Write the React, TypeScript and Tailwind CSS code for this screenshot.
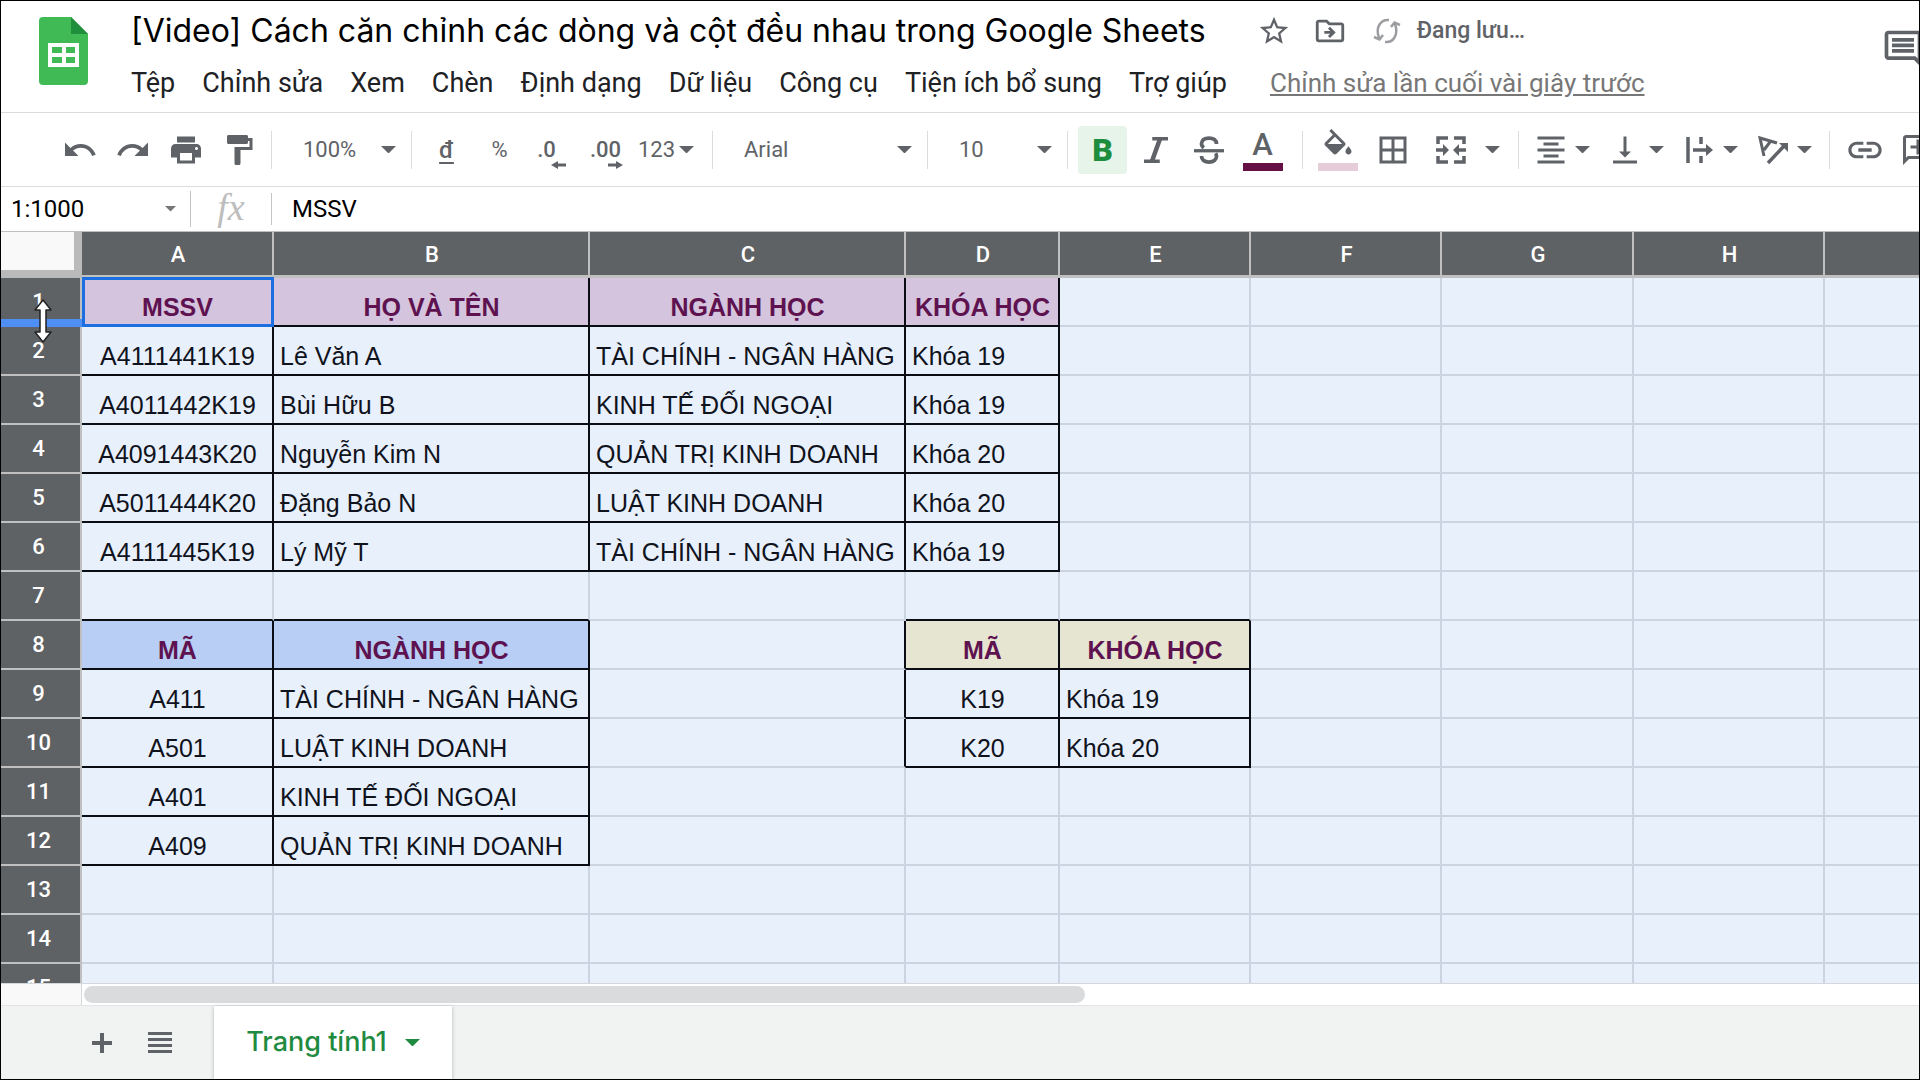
import type { ReactNode } from 'react';
import {
  MdBorderAll,
  MdFormatAlignCenter,
  MdFormatPaint,
  MdLink,
  MdOutlineAddComment,
  MdOutlineComment,
  MdOutlineDriveFileMove,
  MdPrint,
  MdRedo,
  MdStarBorder,
  MdUndo,
  MdVerticalAlignBottom,
} from 'react-icons/md';

type Block = {
  row: number;
  col: number;
  fill: string;
  centered: number[];
  data: string[][];
};

type CellInfo = { text: string; header: boolean; centered: boolean; fill: string };

const menus = ['Tệp', 'Chỉnh sửa', 'Xem', 'Chèn', 'Định dạng', 'Dữ liệu', 'Công cụ', 'Tiện ích bổ sung', 'Trợ giúp'];

const columns = [
  { name: 'A', width: 'w-[192px]' },
  { name: 'B', width: 'w-[316px]' },
  { name: 'C', width: 'w-[316px]' },
  { name: 'D', width: 'w-[154px]' },
  { name: 'E', width: 'w-[191px]' },
  { name: 'F', width: 'w-[191px]' },
  { name: 'G', width: 'w-[192px]' },
  { name: 'H', width: 'w-[191px]' },
  { name: '', width: 'w-auto' },
];

const rows = Array.from({ length: 15 }, (_, i) => i + 1);

const blocks: Block[] = [
  {
    row: 1,
    col: 0,
    fill: 'bg-[#d5c4dd]',
    centered: [0],
    data: [
      ['MSSV', 'HỌ VÀ TÊN', 'NGÀNH HỌC', 'KHÓA HỌC'],
      ['A4111441K19', 'Lê Văn A', 'TÀI CHÍNH - NGÂN HÀNG', 'Khóa 19'],
      ['A4011442K19', 'Bùi Hữu B', 'KINH TẾ ĐỐI NGOẠI', 'Khóa 19'],
      ['A4091443K20', 'Nguyễn Kim N', 'QUẢN TRỊ KINH DOANH', 'Khóa 20'],
      ['A5011444K20', 'Đặng Bảo N', 'LUẬT KINH DOANH', 'Khóa 20'],
      ['A4111445K19', 'Lý Mỹ T', 'TÀI CHÍNH - NGÂN HÀNG', 'Khóa 19'],
    ],
  },
  {
    row: 8,
    col: 0,
    fill: 'bg-[#b8cef4]',
    centered: [0],
    data: [
      ['MÃ', 'NGÀNH HỌC'],
      ['A411', 'TÀI CHÍNH - NGÂN HÀNG'],
      ['A501', 'LUẬT KINH DOANH'],
      ['A401', 'KINH TẾ ĐỐI NGOẠI'],
      ['A409', 'QUẢN TRỊ KINH DOANH'],
    ],
  },
  {
    row: 8,
    col: 3,
    fill: 'bg-[#e6e5d1]',
    centered: [3],
    data: [
      ['MÃ', 'KHÓA HỌC'],
      ['K19', 'Khóa 19'],
      ['K20', 'Khóa 20'],
    ],
  },
];

function cellAt(row: number, col: number): CellInfo | null {
  for (const b of blocks) {
    const text = b.data[row - b.row]?.[col - b.col];
    if (text !== undefined) {
      return { text, header: row === b.row, centered: b.centered.includes(col), fill: b.fill };
    }
  }
  return null;
}

function Caret({ className = 'w-[15px]' }: { className?: string }) {
  return (
    <svg viewBox="0 0 16 8" className={`shrink-0 fill-current ${className}`} aria-hidden="true">
      <path d="M0 0h16L8 8z" />
    </svg>
  );
}

function Divider({ className = '' }: { className?: string }) {
  return <div className={`h-[38px] w-px shrink-0 bg-[#dadce0] ${className}`} />;
}

function ToolButton({ label, className = 'w-[53px]', children }: { label: string; className?: string; children: ReactNode }) {
  return (
    <button type="button" aria-label={label} className={`flex h-12 shrink-0 items-center justify-center ${className}`}>
      {children}
    </button>
  );
}

function MenuTool({ label, children }: { label: string; children: ReactNode }) {
  return (
    <button type="button" aria-label={label} className="flex h-12 w-[74px] shrink-0 items-center gap-1.5">
      {children}
      <Caret />
    </button>
  );
}

function Picker({ label, value, className }: { label: string; value: string; className: string }) {
  return (
    <label className={`relative flex shrink-0 items-center ${className}`}>
      <select aria-label={label} defaultValue={value} className="h-12 w-full appearance-none bg-transparent pl-[31px] outline-none">
        <option>{value}</option>
      </select>
      <Caret className="pointer-events-none absolute right-[15px] w-[15px]" />
    </label>
  );
}

function SheetsLogo() {
  return (
    <svg viewBox="0 0 49 68" className="h-[68px] w-[49px] shrink-0" aria-hidden="true">
      <path d="M4 0h28l17 17v47a4 4 0 0 1-4 4H4a4 4 0 0 1-4-4V4a4 4 0 0 1 4-4z" fill="#40ba55" />
      <path d="M32 0l17 17H32z" fill="#1f8e3d" />
      <path d="M9 26h31v24H9z" fill="#fff" />
      <path d="M13 30h10v6H13zM27 30h9v6h-9zM13 40h10v6H13zM27 40h9v6h-9z" fill="#40ba55" />
    </svg>
  );
}

function SyncIcon() {
  return (
    <svg viewBox="0 0 28 28" className="size-7 fill-none stroke-[#9b9da0] stroke-[2.5]" aria-hidden="true">
      <path d="M16 3C8 2 2 10 6 21M1 20l5.500 2.500L10 18M12 25c8 1 14-7 10-18M27 8l-5.500-2.500L18 10" />
    </svg>
  );
}

function ItalicIcon() {
  return (
    <svg viewBox="0 0 24 24" className="size-9 fill-none stroke-current" aria-hidden="true">
      <path d="M9.500 4.500H20M4 19.500h10.500" strokeWidth="2.400" />
      <path d="M14.700 4.500L9.300 19.500" strokeWidth="3" />
    </svg>
  );
}

function StrikeIcon() {
  return (
    <svg viewBox="0 0 24 24" className="size-9 fill-none stroke-current" aria-hidden="true">
      <path d="M17 8c0-2.500-2-4-5-4S7 5.500 7 7.800c0 1.200.6 2 1.600 2.700M7 16c0 2.500 2 4 5 4s5-1.500 5-3.800c0-.8-.2-1.400-.6-2" strokeWidth="2.500" />
      <path d="M2 12.500h20" strokeWidth="2.200" />
    </svg>
  );
}

function FillIcon() {
  return (
    <svg viewBox="0 0 24 24" className="size-9 fill-current" aria-hidden="true">
      <path d="M16.560 8.940L7.620 0 6.210 1.410l2.380 2.380-5.150 5.150c-.59.59-.59 1.540 0 2.120l5.500 5.500c.29.29.68.44 1.060.44s.77-.15 1.060-.44l5.500-5.500c.59-.58.59-1.530 0-2.120zM5.210 10L10 5.210 14.790 10H5.210zM19 11.500s-2 2.170-2 3.500c0 1.100.9 2 2 2s2-.9 2-2c0-1.330-2-3.500-2-3.500z" />
    </svg>
  );
}

function MergeIcon() {
  return (
    <svg viewBox="0 0 32 32" className="size-8 fill-none stroke-current stroke-[3.5]" aria-hidden="true">
      <path d="M3 10V4h10M19 4h10v6M3 22v6h10M19 28h10v-6" />
      <path d="M1 16h9M31 16h-9" />
      <path d="M8 10l6 6-6 6zM24 10l-6 6 6 6z" className="fill-current stroke-none" />
    </svg>
  );
}

function WrapIcon() {
  return (
    <svg viewBox="0 0 36 36" className="size-9 fill-none stroke-current stroke-[3.5]" aria-hidden="true">
      <path d="M7 5v26M20 5v7M20 24v7M12 18h14" />
      <path d="M25 12l7 6-7 6z" className="fill-current stroke-none" />
    </svg>
  );
}

function RotateIcon() {
  return (
    <svg viewBox="0 0 36 36" className="size-9 fill-none stroke-current" aria-hidden="true">
      <path d="M9 24L5 6l17 5M9 18l6-8" strokeWidth="3" />
      <path d="M13 31L29 14" strokeWidth="3.500" />
      <path d="M24 11h9v9z" className="fill-current stroke-none" />
    </svg>
  );
}

function DecimalIcon({ text, right }: { text: string; right?: boolean }) {
  return (
    <span className={`relative font-medium ${right ? '' : 'pr-3'}`}>
      {text}
      <svg
        viewBox="0 0 15 8"
        className={`absolute top-7 h-2 w-[15px] fill-current ${right ? 'left-[18px]' : 'left-[14px] rotate-180'}`}
        aria-hidden="true"
      >
        <path d="M0 2.500h8V0l7 4-7 4V5.500H0z" />
      </svg>
    </span>
  );
}

function ResizeCursor() {
  return (
    <svg viewBox="0 0 20 46" className="pointer-events-none absolute top-5 left-8 z-10 h-[46px] w-5" aria-hidden="true">
      <path
        d="M10 2l8 10h-5v22h5l-8 10-8-10h5V12H2z"
        fill="#fff"
        stroke="#222"
        strokeWidth="1.500"
        strokeLinejoin="round"
      />
    </svg>
  );
}

function Header() {
  return (
    <header className="flex h-[111px] shrink-0 items-start overflow-hidden pl-[38px]">
      <div className="pt-4">
        <SheetsLogo />
      </div>
      <div className="min-w-0 flex-1 pl-[43px]">
        <div className="flex h-[60px] items-center text-[#5f6368]">
          <h1 className="font-[Inter,sans-serif] text-[32px] leading-10 whitespace-nowrap text-black">
            [Video] Cách căn chỉnh các dòng và cột đều nhau trong Google Sheets
          </h1>
          <button type="button" aria-label="Gắn dấu sao" className="ml-[51px]">
            <MdStarBorder className="size-[34px]" />
          </button>
          <button type="button" aria-label="Di chuyển" className="ml-[22px]">
            <MdOutlineDriveFileMove className="size-[34px]" />
          </button>
          <div className="ml-[26px] flex items-center gap-4 text-[23px] font-medium whitespace-nowrap">
            <SyncIcon />
            Đang lưu…
          </div>
        </div>
        <nav className="flex h-11 items-center gap-[27px] text-[27px] whitespace-nowrap text-[#202124]">
          {menus.map((m) => (
            <button key={m} type="button">
              {m}
            </button>
          ))}
          <a href="#history" className="ml-4 text-[26px] text-[#777] underline">
            Chỉnh sửa lần cuối vài giây trước
          </a>
        </nav>
      </div>
      <button type="button" aria-label="Nhận xét" className="-mr-1.5 shrink-0 pt-[26px] text-[#5f6368]">
        <MdOutlineComment className="size-11" />
      </button>
    </header>
  );
}

function Toolbar() {
  return (
    <div className="flex h-[75px] shrink-0 items-center overflow-hidden border-y border-[#dcdcdc] pl-[52px] text-[22px] text-[#5f6368]">
      <ToolButton label="Hủy">
        <MdUndo className="size-9" />
      </ToolButton>
      <ToolButton label="Làm lại">
        <MdRedo className="size-9" />
      </ToolButton>
      <ToolButton label="In">
        <MdPrint className="size-9" />
      </ToolButton>
      <ToolButton label="Sao chép định dạng">
        <MdFormatPaint className="size-9" />
      </ToolButton>
      <Divider className="ml-1.5" />
      <Picker label="Thu phóng" value="100%" className="w-[139px]" />
      <Divider className="mr-2" />
      <ToolButton label="Tiền tệ">
        <span className="text-2xl leading-7 font-medium underline underline-offset-4">đ</span>
      </ToolButton>
      <ToolButton label="Phần trăm">%</ToolButton>
      <ToolButton label="Giảm số thập phân">
        <DecimalIcon text=".0" />
      </ToolButton>
      <ToolButton label="Tăng số thập phân">
        <DecimalIcon text=".00" right />
      </ToolButton>
      <ToolButton label="Định dạng số" className="w-[68px] gap-1">
        123
        <Caret />
      </ToolButton>
      <Divider className="ml-3" />
      <Picker label="Phông chữ" value="Arial" className="w-[214px]" />
      <Divider />
      <Picker label="Cỡ chữ" value="10" className="w-[139px]" />
      <Divider className="mr-2" />
      <ToolButton label="In đậm">
        <span className="flex h-12 w-[49px] items-center justify-center rounded-sm bg-[#e6f4ea] text-[32px] font-black text-[#1e8e3e]">
          B
        </span>
      </ToolButton>
      <ToolButton label="In nghiêng">
        <ItalicIcon />
      </ToolButton>
      <ToolButton label="Gạch ngang">
        <StrikeIcon />
      </ToolButton>
      <ToolButton label="Màu văn bản" className="w-[55px]">
        <span className="flex h-[42px] w-10 flex-col items-center justify-between text-[31px] leading-8 font-medium">
          A
          <span className="h-2 w-full bg-[#660f45]" />
        </span>
      </ToolButton>
      <Divider className="mr-2 ml-3" />
      <ToolButton label="Màu nền">
        <span className="flex h-[42px] w-10 flex-col items-center justify-between">
          <span className="h-7">
            <FillIcon />
          </span>
          <span className="h-2 w-full bg-[#e6cbd8]" />
        </span>
      </ToolButton>
      <ToolButton label="Đường viền" className="w-[58px]">
        <MdBorderAll className="size-9" />
      </ToolButton>
      <ToolButton label="Hợp nhất ô" className="w-[58px]">
        <MergeIcon />
      </ToolButton>
      <ToolButton label="Kiểu hợp nhất" className="w-6">
        <Caret />
      </ToolButton>
      <Divider className="mx-3.5" />
      <MenuTool label="Căn ngang">
        <MdFormatAlignCenter className="size-9" />
      </MenuTool>
      <MenuTool label="Căn dọc">
        <MdVerticalAlignBottom className="size-9" />
      </MenuTool>
      <MenuTool label="Xuống dòng">
        <WrapIcon />
      </MenuTool>
      <MenuTool label="Xoay văn bản">
        <RotateIcon />
      </MenuTool>
      <Divider className="mr-2" />
      <ToolButton label="Chèn đường liên kết">
        <MdLink className="size-10" />
      </ToolButton>
      <ToolButton label="Chèn nhận xét">
        <MdOutlineAddComment className="size-9 -scale-x-100" />
      </ToolButton>
    </div>
  );
}

function FormulaBar() {
  return (
    <div className="flex h-[45px] shrink-0 items-center border-b border-[#c0c0c0] text-2xl text-black">
      <input aria-label="Hộp tên" defaultValue="1:1000" className="w-[150px] pl-2.5 outline-none" />
      <button type="button" aria-label="Mở hộp tên" className="flex w-[39px] justify-center pr-1 pl-1 text-[#777]">
        <Caret className="w-[11px]" />
      </button>
      <div className="h-9 w-px bg-[#c4c4c4]" />
      <span className="w-20 pb-1 text-center font-['Liberation_Serif',serif] text-[38px] leading-9 text-[#bdbdbd] italic">fx</span>
      <div className="h-8 w-px bg-[#c4c4c4]" />
      <input aria-label="Thanh công thức" defaultValue="MSSV" className="flex-1 pl-5 outline-none" />
    </div>
  );
}

function Cell({ row, col }: { row: number; col: number }) {
  const cell = cellAt(row, col);
  const right = cell || cellAt(row, col + 1) ? 'border-r-[#0b0d14]' : 'border-r-[#ccd4e1]';
  const bottom = cell || cellAt(row + 1, col) ? 'border-b-[#0b0d14]' : 'border-b-[#ccd4e1]';
  const rightWidth = col === columns.length - 1 ? 'border-r-0' : 'border-r-2';
  const fill = cell?.header ? cell.fill : 'bg-[#e8f0fc]';
  const align = cell?.header || cell?.centered ? 'pl-px text-center' : 'pl-1.5 text-left';
  const font = cell?.header ? 'font-bold text-[#5e1250]' : 'text-[#10131c]';
  const active = row === 1 && col === 0;

  return (
    <td
      className={`relative h-[49px] border-b-2 pb-[3px] align-bottom leading-[30px] whitespace-nowrap ${rightWidth} ${right} ${bottom} ${fill} ${align} ${font}`}
    >
      {cell?.text}
      {active && <span className="absolute -top-px -right-0.5 -bottom-0.5 left-0 border-3 border-[#1b6fe0]" />}
    </td>
  );
}

function Grid() {
  return (
    <div className="min-h-0 flex-1 overflow-hidden border-b border-[#d4d7dc] bg-[#e8f0fc]">
      <table className="w-full table-fixed border-separate border-spacing-0 font-['Liberation_Sans',Arial,sans-serif] text-[25px]">
        <colgroup>
          <col className="w-[81px]" />
          {columns.map((c, i) => (
            <col key={i} className={c.width} />
          ))}
        </colgroup>
        <thead>
          <tr className="font-[Roboto,sans-serif] text-[22px] text-white">
            <td className="h-[46px] border-r-8 border-b-8 border-[#bababa] bg-[#f9f9f9]" />
            {columns.map((c, i) => (
              <th
                key={i}
                scope="col"
                className="border-r-2 border-b-[3px] border-[#c0c0c0] bg-[#5f6265] pt-0.5 pl-0.5 font-medium last:border-r-0"
              >
                {c.name}
              </th>
            ))}
          </tr>
        </thead>
        <tbody>
          {rows.map((r) => (
            <tr key={r}>
              <th
                scope="row"
                className="relative h-[49px] border-r-2 border-b-2 border-[#c0c0c0] bg-[#5f6265] pr-1 font-[Roboto,sans-serif] text-[22px] font-medium text-white"
              >
                {r}
                {r === 1 && (
                  <>
                    <span className="absolute -right-0.5 -bottom-0.5 left-0 h-2 bg-[#4f8ff5]" />
                    <ResizeCursor />
                  </>
                )}
              </th>
              {columns.map((_, i) => (
                <Cell key={i} row={r} col={i} />
              ))}
            </tr>
          ))}
        </tbody>
      </table>
    </div>
  );
}

function Footer() {
  return (
    <footer className="shrink-0">
      <div className="flex h-[22px] items-center border-b border-[#e3e4e6]">
        <div className="h-full w-[81px] border-r border-[#d4d7dc] bg-[#f8f9f8]" />
        <div className="flex-1 pl-0.5">
          <div className="h-[17px] w-6/11 rounded-full bg-[#dadbdc]" />
        </div>
      </div>
      <div className="flex h-[73px] items-center bg-[#f1f3f3] text-[#5f6368]">
        <button type="button" aria-label="Thêm trang tính" className="ml-[91px]">
          <svg viewBox="0 0 20 20" className="size-5 fill-current" aria-hidden="true">
            <path d="M8 0h4v8h8v4h-8v8H8v-8H0V8h8z" />
          </svg>
        </button>
        <button type="button" aria-label="Tất cả trang tính" className="ml-9">
          <svg viewBox="0 0 24 24" className="size-6 fill-current" aria-hidden="true">
            <path d="M0 1h24v3H0zM0 7h24v3H0zM0 13h24v3H0zM0 19h24v3H0z" />
          </svg>
        </button>
        <button
          type="button"
          className="ml-[42px] flex h-full w-[238px] items-center justify-center gap-[18px] bg-white font-[Inter,sans-serif] text-[27px] font-medium text-[#1f8b40] shadow-[0_1px_4px_rgba(0,0,0,0.25)]"
        >
          Trang tính1
          <Caret />
        </button>
      </div>
    </footer>
  );
}

export default function App() {
  return (
    <div className="flex h-screen w-full flex-col overflow-hidden border border-black bg-white font-[Roboto,sans-serif]">
      <Header />
      <Toolbar />
      <FormulaBar />
      <Grid />
      <Footer />
    </div>
  );
}
